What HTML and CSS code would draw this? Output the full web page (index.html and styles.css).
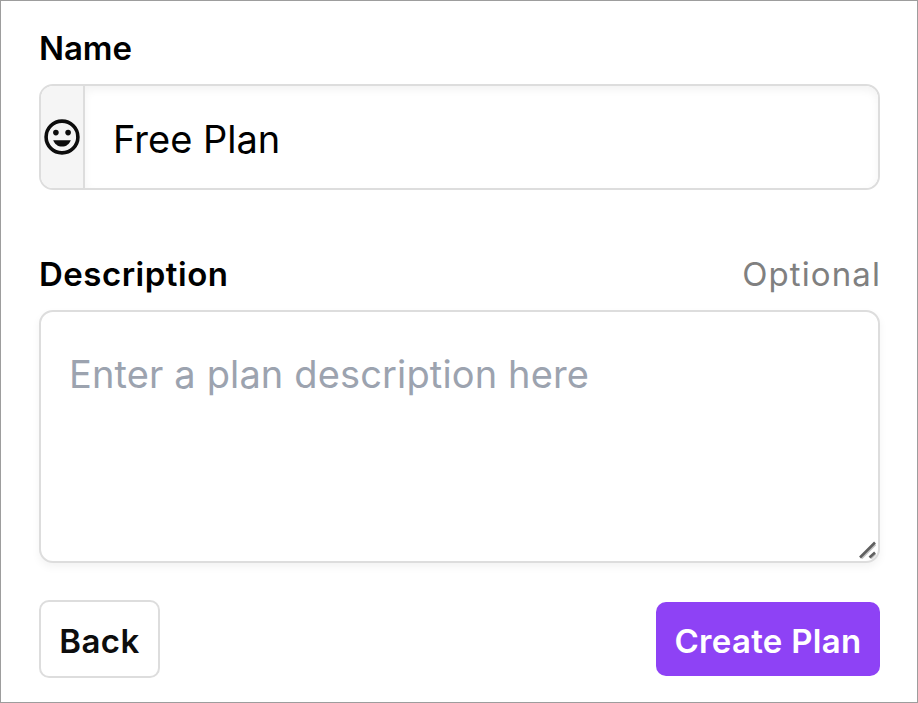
FILE: index.html
```
<!DOCTYPE html>
<html>
<head>
	<meta charset="utf-8">
	<title>Create Plan</title>
	<link rel="stylesheet" href="styles.css">
</head>
<body>
<form class="plan-form">
	<div class="label-row">
		<label class="name-label" for="name">Name</label>
	</div>
	<div class="name-field">
		<button class="emoji" type="button" aria-label="Emoji">
			<svg viewBox="0 0 36 36" width="36" height="36">
				<circle cx="18" cy="18" r="15.9" fill="none" stroke="#0d0d0d" stroke-width="3.6"/>
				<circle cx="11.9" cy="13.6" r="2.8" fill="#0d0d0d"/>
				<circle cx="24.1" cy="13.6" r="2.8" fill="#0d0d0d"/>
				<path d="M9.2 21.2h17.6c-1.3 3.8-4.7 6.4-8.8 6.4s-7.5-2.6-8.8-6.4z" fill="#0d0d0d"/>
			</svg>
		</button>
		<input class="name-input" id="name" type="text" value="Free Plan" spellcheck="false">
	</div>

	<div class="label-row">
		<label class="desc-label" for="desc">Description</label>
		<span class="optional">Optional</span>
	</div>
	<div class="desc-field">
		<textarea class="desc-input" id="desc" placeholder="Enter a plan description here"></textarea>
		<svg class="grip" viewBox="0 0 18 18" width="18" height="18">
			<path d="M2.5 17.5l14-14M12 17.5l4.5-4.5" stroke="#c4c4c4" stroke-width="2"/>
			<path d="M1 16.5l15-15M10.5 16.5l5.5-5" stroke="#606060" stroke-width="2.6"/>
		</svg>
	</div>

	<div class="actions">
		<button class="btn back" type="button">Back</button>
		<button class="btn create" type="button">Create Plan</button>
	</div>
</form>
</body>
</html>
```
FILE: styles.css
```
*{
	box-sizing: border-box;
}
body{
	margin: 0;
	background-color: #fff;
	color: #000;
	font-family: Inter, "Liberation Sans", sans-serif;
}
.plan-form{
	height: 703px;
	padding: 27px 37px 0 38px;
	border: 1px solid #9d9d9d;
}
.label-row{
	display: flex;
	justify-content: space-between;
	height: 40px;
	margin-bottom: 16px;
	font-size: 33px;
	line-height: 40px;
}
.name-label,
.desc-label{
	font-weight: 600;
}
.name-label{
	letter-spacing: -0.1px;
}
.desc-label{
	letter-spacing: 0.5px;
}
.optional{
	margin-right: -1px;
	letter-spacing: 1.1px;
	color: #808080;
}
.name-field{
	display: flex;
	height: 106px;
	margin-bottom: 64px;
	border: 2px solid #ddd;
	border-radius: 14px;
	overflow: hidden;
}
.emoji{
	display: flex;
	align-items: center;
	justify-content: center;
	width: 44px;
	padding: 0;
	border: none;
	border-right: 2px solid #ddd;
	background-color: #f5f5f5;
}
.emoji svg{
	flex: none;
}
.name-input{
	flex: 1;
	min-width: 0;
	padding: 4px 28px 0;
	border: none;
	outline: none;
	border-radius: 0 12px 12px 0;
	box-shadow: inset 0 4px 8px rgba(0,0,0,0.05);
	font: 400 38px Inter, "Liberation Sans", sans-serif;
	color: #000;
}
.desc-field{
	position: relative;
	height: 253px;
	margin-bottom: 37px;
}
.desc-input{
	display: block;
	width: 100%;
	height: 100%;
	padding: 37px 28px;
	border: 2px solid #ddd;
	border-radius: 14px;
	outline: none;
	resize: none;
	box-shadow: 0 4px 8px rgba(0,0,0,0.05);
	font: 400 38px/50px Inter, "Liberation Sans", sans-serif;
	letter-spacing: 0.14px;
}
.desc-input::placeholder{
	color: #9ca3af;
}
.grip{
	position: absolute;
	right: 3px;
	bottom: 4px;
}
.actions{
	display: flex;
	align-items: center;
	justify-content: space-between;
}
.btn{
	padding: 4px 0 0;
	font: 600 33px Inter, "Liberation Sans", sans-serif;
	white-space: nowrap;
}
.back{
	width: 121px;
	height: 78px;
	border: 2px solid #ddd;
	border-radius: 10px;
	background-color: #fff;
	color: #0d0d0d;
	letter-spacing: 0.4px;
}
.create{
	width: 224px;
	height: 74px;
	border: none;
	border-radius: 10px;
	background-color: #8e42f5;
	color: #fff;
	letter-spacing: 0.3px;
}
```
